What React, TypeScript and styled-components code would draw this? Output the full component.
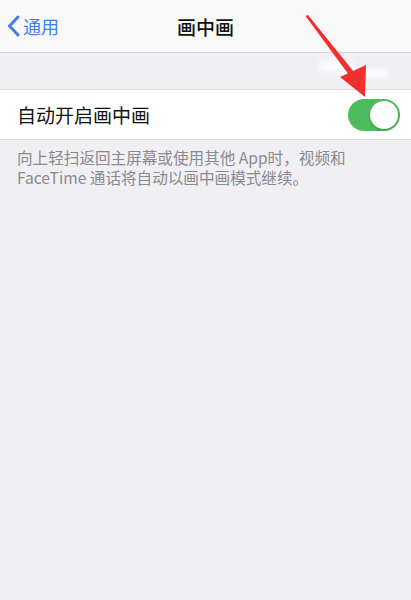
import React, { useState } from 'react';
import styled, { createGlobalStyle } from 'styled-components';

const GlobalStyle = createGlobalStyle`
  html, body {
    margin: 0;
    padding: 0;
    background: #efeff4;
  }
  body {
    font-family: "Noto Sans CJK SC", "Noto Sans", "Liberation Sans", sans-serif;
    -webkit-font-smoothing: antialiased;
  }
`;

const Screen = styled.div`
  position: relative;
  width: 411px;
  min-height: 600px;
  background: #efeff4;
  overflow: hidden;
`;

const NavBar = styled.header`
  position: relative;
  height: 52px;
  display: flex;
  align-items: center;
  justify-content: center;
  background: #f8f8f8;
  border-bottom: 1px solid #d6d6da;
`;

const BackButton = styled.button`
  position: absolute;
  left: 7px;
  top: 0;
  bottom: 0;
  display: flex;
  align-items: center;
  gap: 3px;
  padding: 0;
  border: none;
  background: none;
  color: #3d7ef0;
  font-family: inherit;
  font-size: 18px;
  cursor: pointer;
`;

const NavTitle = styled.h1`
  margin: 0;
  font-size: 19px;
  font-weight: 500;
  color: #111;
`;

const Spacer = styled.div`
  height: 36px;
`;

const Group = styled.section`
  background: #fff;
  border-top: 1px solid #dedee2;
  border-bottom: 1px solid #dedee2;
`;

const Row = styled.div`
  height: 49px;
  display: flex;
  align-items: center;
  justify-content: space-between;
  padding: 0 11px 0 17px;
`;

const RowLabel = styled.span`
  font-size: 19px;
  color: #111;
`;

const Track = styled.button<{ $on: boolean }>`
  position: relative;
  width: 52px;
  height: 32px;
  padding: 0;
  border: none;
  border-radius: 16px;
  background: ${({ $on }) => ($on ? '#4cbd5c' : '#e5e5ea')};
  cursor: pointer;
`;

const Knob = styled.span<{ $on: boolean }>`
  position: absolute;
  top: 2px;
  left: ${({ $on }) => ($on ? '22px' : '2px')};
  width: 28px;
  height: 28px;
  border-radius: 50%;
  background: #fff;
  box-shadow: 0 1px 3px rgba(0, 0, 0, 0.25);
  transition: left 0.2s;
`;

const Footer = styled.p`
  margin: 0;
  padding: 7px 17px 0;
  font-size: 15.6px;
  line-height: 20px;
  color: #8a8a8e;
`;

const Smudge = styled.div`
  position: absolute;
  left: 318px;
  top: 60px;
  width: 72px;
  height: 20px;
  filter: blur(3px);

  &::before,
  &::after {
    content: '';
    position: absolute;
    background: #fff;
    border-radius: 10px;
  }
  &::before {
    left: 0;
    top: 2px;
    width: 36px;
    height: 9px;
  }
  &::after {
    left: 22px;
    top: 10px;
    width: 48px;
    height: 7px;
  }
`;

const Arrow = styled.svg`
  position: absolute;
  left: 0;
  top: 0;
  pointer-events: none;
`;

export default function App() {
  const [on, setOn] = useState(true);

  return (
    <>
      <GlobalStyle />
      <Screen>
        <NavBar>
          <BackButton>
            <svg width="13" height="22" viewBox="0 0 13 22">
              <path d="M11 2 L2.5 11 L11 20" fill="none" stroke="#3d7ef0" strokeWidth="3" strokeLinecap="round" strokeLinejoin="round" />
            </svg>
            通用
          </BackButton>
          <NavTitle>画中画</NavTitle>
        </NavBar>
        <Spacer />
        <Group>
          <Row>
            <RowLabel>自动开启画中画</RowLabel>
            <Track $on={on} onClick={() => setOn(!on)}>
              <Knob $on={on} />
            </Track>
          </Row>
        </Group>
        <Footer>
          向上轻扫返回主屏幕或使用其他 App时，视频和
          <br />
          FaceTime 通话将自动以画中画模式继续。
        </Footer>
        <Smudge />
        <Arrow width="411" height="120" viewBox="0 0 411 120">
          <path d="M305.5 16 L308 15 L354 72 L349 75 Z" fill="#f0302f" />
          <path d="M340 77 L366 65 L365 97 Z" fill="#f0302f" />
        </Arrow>
      </Screen>
    </>
  );
}
